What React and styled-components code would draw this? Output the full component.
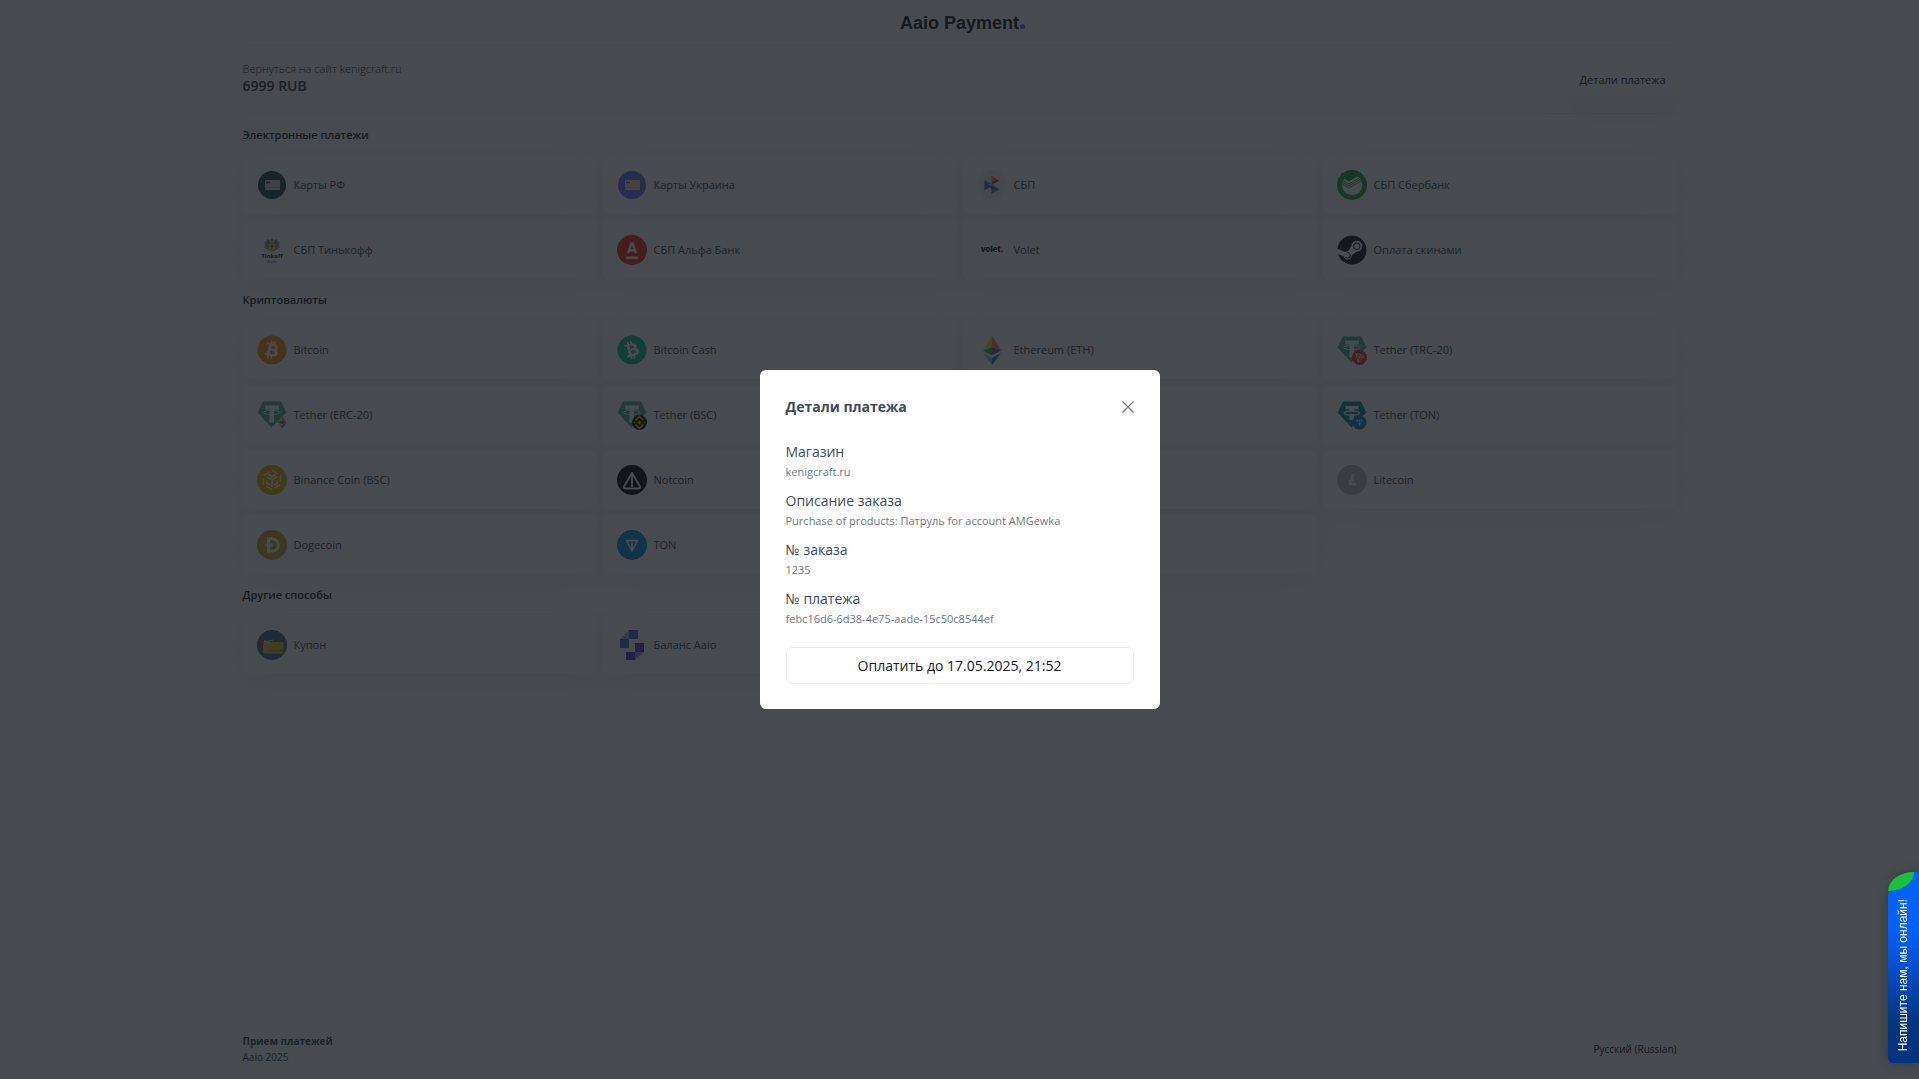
import React, { useState } from 'react';
import styled, { createGlobalStyle } from 'styled-components';
import { FaBitcoin, FaSteam } from 'react-icons/fa';

const GlobalStyle = createGlobalStyle`
  * {
    box-sizing: border-box;
  }

  body {
    margin: 0;
    background: #ffffff;
    color: #3e4b5b;
    font-family: 'Open Sans', 'Noto Sans', sans-serif;
    font-size: 11px;
  }

  button {
    font-family: inherit;
    font-size: 11px;
  }
`;

const Page = styled.div`
  min-height: 100vh;
  max-width: 1466px;
  margin: 0 auto;
  padding: 0 16px;
  display: flex;
  flex-direction: column;
`;

const Header = styled.header`
  height: 46px;
  padding: 2px 0 0 6px;
  display: flex;
  align-items: center;
  justify-content: center;
  border-bottom: 1px solid #f3f5f7;
`;

const Logo = styled.a`
  display: flex;
  align-items: baseline;
  color: #16202b;
  font-family: 'Liberation Sans', Arial, sans-serif;
  font-size: 18px;
  font-weight: 700;
  text-decoration: none;
`;

const LogoDot = styled.span`
  width: 5px;
  height: 5px;
  margin-left: 1px;
  border-radius: 50%;
  background: #5c74ea;
`;

const Summary = styled.div`
  height: 68px;
  display: flex;
  align-items: center;
  justify-content: space-between;
  border-bottom: 1px solid #f3f5f7;
`;

const BackLink = styled.a`
  display: block;
  margin-top: -4px;
  color: #2c3a4a;
  font-weight: 300;
  line-height: 16px;
  text-decoration: none;
`;

const Amount = styled.div`
  color: #2c3a4a;
  font-size: 14px;
  font-weight: 600;
  line-height: 18px;
`;

const DetailsButton = styled.button`
  height: 30px;
  padding: 0 11px;
  border: none;
  border-radius: 5px;
  background: #ffffff;
  color: #1d2935;
  box-shadow: 0 16px 40px rgba(60, 80, 90, 0.08);
`;

const SectionTitle = styled.h2`
  margin: 0;
  color: #16202b;
  font-size: 11px;
  font-weight: 600;
  line-height: 41px;
`;

const Grid = styled.div`
  display: grid;
  grid-template-columns: repeat(4, 1fr);
  gap: 6px;
`;

const MethodCard = styled.button`
  height: 59px;
  padding: 0 14px;
  display: flex;
  align-items: center;
  gap: 7px;
  border: none;
  border-radius: 5px;
  background: #ffffff;
  color: #3e4b5b;
  text-align: left;
  box-shadow: 0 6px 30px rgba(60, 80, 90, 0.07);
`;

const IconBox = styled.span`
  width: 30px;
  height: 30px;
  display: flex;
  color: ${props => props.$color || 'inherit'};

  svg {
    width: 30px;
    height: 30px;
    transform: rotate(${props => props.$turn || 0}deg);
  }
`;

const Footer = styled.footer`
  margin-top: auto;
  padding-bottom: 14px;
  display: flex;
  align-items: center;
  justify-content: space-between;
  color: #3e4b5b;
  font-size: 10px;
  line-height: 16px;
`;

const LanguageButton = styled.button`
  padding: 0;
  border: none;
  background: none;
  color: #16202b;
  font-size: 10px;
`;

const Overlay = styled.div`
  position: fixed;
  inset: 0;
  display: flex;
  align-items: center;
  justify-content: center;
  background: rgba(21, 25, 30, 0.79);
`;

const Modal = styled.div`
  width: 400px;
  padding: 26px 26px 25px;
  border-radius: 6px;
  background: #ffffff;
`;

const ModalHeader = styled.div`
  margin-bottom: 24px;
  display: flex;
  align-items: center;
  justify-content: space-between;
`;

const ModalTitle = styled.h3`
  margin: 0;
  font-size: 14px;
  font-weight: 700;
  line-height: 22px;
`;

const CloseButton = styled.button`
  padding: 0;
  display: flex;
  border: none;
  background: none;
  color: #808080;
`;

const DetailList = styled.dl`
  margin: 0 0 19px;
  display: grid;
  gap: 10px;
`;

const DetailLabel = styled.dt`
  font-size: 14px;
  font-weight: 500;
  line-height: 20px;
`;

const DetailValue = styled.dd`
  margin: 0;
  color: #6e7a8a;
  font-size: 11px;
  line-height: 19px;
`;

const PayButton = styled.button`
  width: 100%;
  height: 37px;
  border: 1px solid #ebecf2;
  border-radius: 7px;
  background: #ffffff;
  color: #16192c;
  font-size: 14px;
`;

const ChatTab = styled.button`
  position: fixed;
  right: 0;
  bottom: 16px;
  width: 31px;
  height: 191px;
  padding: 0 2px 12px 0;
  display: flex;
  align-items: flex-end;
  justify-content: center;
  border: none;
  border-radius: 26px 0 0 5px;
  background: linear-gradient(#0061ff 30%, #00347e 80%);
  color: #ffffff;
  font-family: 'Liberation Sans', Arial, sans-serif;
  font-size: 12px;
  box-shadow: 0 0 12px rgba(0, 0, 0, 0.25);

  span {
    writing-mode: vertical-rl;
    transform: rotate(180deg);
    white-space: nowrap;
  }
`;

const ChatLeaf = styled.i`
  position: absolute;
  top: 0;
  left: 0;
  width: 26px;
  height: 19px;
  border-radius: 26px 0 26px 0 / 19px 0 19px 0;
  background: #18c139;
`;

const Svg = ({ children }) => (
  <svg viewBox="0 0 30 30" fill="none" aria-hidden="true">{children}</svg>
);

const CardIcon = ({ bg, card }) => (
  <Svg>
    <circle cx="15" cy="15" r="14" fill={bg} />
    <rect x="8" y="10" width="15" height="10" rx="1" fill={card} />
    <path d="M8 17.500h15" stroke={bg} strokeOpacity="0.3" />
    <path d="M9 12.500h4" stroke={bg} strokeWidth="1.500" />
  </Svg>
);

const SbpIcon = () => (
  <Svg>
    <circle cx="15" cy="15" r="14.500" fill="#f1f3f5" />
    <path d="M7.500 10v10.500l3-5.250z" fill="#5b57a2" />
    <path d="M7.500 10l6 3.500-3 2z" fill="#1d8cc8" />
    <path d="M7.500 20.500l6-4-3-1.500z" fill="#8b4ba0" />
    <path d="M14.500 6v9l3-5z" fill="#f9a61a" />
    <path d="M14.500 6l8 4.500-5 1z" fill="#ee6a23" />
    <path d="M22.500 10.500l-8 4.500 1-4z" fill="#d8195a" />
    <path d="M14.500 15v9l3-5z" fill="#1b9a4a" />
    <path d="M14.500 24l8-4.500-5-2z" fill="#63b22f" />
    <path d="M10 14l12.500 5.500-8-.5z" fill="#1474bb" />
    <path d="M10 10.800l12.500 8.700h-3z" fill="#1d8cc8" />
  </Svg>
);

const SberIcon = () => (
  <Svg>
    <circle cx="15" cy="15" r="15" fill="#21a038" />
    <circle cx="15.200" cy="15" r="10.200" fill="#fff" />
    <path d="M4 3h20l-3 3-9.500 5.500-6-4z" fill="#21a038" />
    <path
      d="M4 9.500l7.500 4.500L24 7M4 11.500l7.500 4.500L25 8.500M4 13.500l7.500 4.500L26 10"
      stroke="#21a038"
      strokeWidth="0.900"
    />
  </Svg>
);

const TinkoffIcon = () => (
  <Svg>
    <path
      d="M15 3l2 2 3-1 1 2 2 1-1 3 1 2-2 2-2 1-4 2-4-2-2-1-2-2 1-2-1-3 2-1 1-2 3 1z"
      fill="#a9acae"
    />
    <path d="M11 6l2 6M19 6l-2 6M8 9l4 3M22 9l-4 3M10 5l1 4M20 5l-1 4" stroke="#666" strokeWidth="0.800" />
    <path d="M12 9h6v3c0 2-1.500 3-3 4-1.500-1-3-2-3-4z" fill="#e2c64c" />
    <path d="M13.500 11h3M15 11v3" stroke="#555" />
    <text x="15" y="22.500" textAnchor="middle" fontSize="6" fontWeight="700" fill="#222">Tinkoff</text>
    <text x="15" y="27.500" textAnchor="middle" fontSize="4" fill="#444">Bank</text>
  </Svg>
);

const AlfaIcon = () => (
  <Svg>
    <circle cx="15" cy="15" r="15" fill="#ef3124" />
    <path d="M11.200 18l3.100-9.500h1.400l3.100 9.500M12.300 15.200h5.400" stroke="#fff" strokeWidth="2.400" />
    <path d="M9 22.700h12" stroke="#fff" strokeWidth="2.400" />
  </Svg>
);

const VoletIcon = () => (
  <Svg>
    <text
      x="15"
      y="16.500"
      textAnchor="middle"
      fontFamily="Inter, sans-serif"
      fontSize="8"
      fontWeight="800"
      fill="#111"
    >
      volet.
    </text>
  </Svg>
);

const EthShape = () => (
  <>
    <path d="M15 1L6 15.500 15 12z" fill="#f2e36b" />
    <path d="M15 1l9 14.500L15 12z" fill="#e88a5b" />
    <path d="M6 15.500L15 12v8.500z" fill="#4fa85c" />
    <path d="M24 15.500L15 12v8.500z" fill="#7d4fa8" />
    <path d="M6 18l9 5v7z" fill="#7fc7e0" />
    <path d="M24 18l-9 5v7z" fill="#3d64b5" />
  </>
);

const EthIcon = () => (
  <Svg>
    <EthShape />
  </Svg>
);

const TetherIcon = ({ color = '#50af95', children }) => (
  <Svg>
    <path d="M6 1.500h18l5.500 11L14.500 27.500.500 12.500z" fill={color} />
    <path d="M8 5.500h14v4h-5v13h-4.500v-13H8z" fill="#fff" />
    <ellipse cx="14.800" cy="12.500" rx="8.500" ry="2" stroke="#fff" strokeWidth="0.900" />
    {children}
  </Svg>
);

const TetherTonIcon = () => (
  <Svg>
    <path d="M6 1.500h18l5.500 11L14.500 27.500.500 12.500z" fill="#009393" />
    <path d="M8.500 6h13v3h-4.500v2.500h-4.500V9h-4zM12.500 14h4.500v6h-4.500z" fill="#fff" />
    <ellipse cx="14.800" cy="13" rx="7.500" ry="2" stroke="#fff" strokeWidth="1.500" />
    <circle cx="22.500" cy="22.500" r="7" fill="#0088cc" />
    <g transform="translate(15 15) scale(0.5)"><TonShape /></g>
  </Svg>
);

const TronBadge = () => (
  <>
    <circle cx="22.500" cy="22.500" r="7.500" fill="#ef2e2e" />
    <path
      d="M18.500 18.500l6 1.300 2 2-5 5.500zM18.500 18.500l3.500 4 4.500-.7M22 22.500l-.5 4.800M22 22.500l2.500-2.700"
      stroke="#fff"
      strokeWidth="0.800"
    />
  </>
);

const BscBadge = () => (
  <>
    <circle cx="22.500" cy="22.500" r="7.500" fill="#111" />
    <path d="M18.500 20.500l4-4 4 4M18.500 24.500l4 4 4-4" stroke="#f0b90b" strokeWidth="1.600" />
    <path d="M22.500 20.500l2 2-2 2-2-2zM17.500 21.500l1 1-1 1-1-1zM27.500 21.500l1 1-1 1-1-1z" fill="#f0b90b" />
  </>
);

const TonShape = () => (
  <path d="M9.500 10.500h11L15 21zM15 10.500V21" stroke="#fff" strokeWidth="1.600" strokeLinejoin="round" />
);

const BnbIcon = () => (
  <Svg>
    <circle cx="15" cy="15" r="15" fill="#e5b000" />
    <path
      d="M15 5.500l8.500 4.800v9.400L15 24.500l-8.500-4.800v-9.400z"
      stroke="#fff"
      strokeWidth="1.400"
      strokeDasharray="7 2.600"
    />
    <path
      d="M9.500 11.500l5.500 3.300 5.500-3.300M15 14.800V22M11.500 9.500L15 11.500l3.500-2M10 15.500v3l2.500 1.500M20 15.500v3L17.500 20"
      stroke="#fff"
      strokeWidth="1.600"
    />
  </Svg>
);

const NotcoinIcon = () => (
  <Svg>
    <circle cx="15" cy="15" r="15" fill="#050505" />
    <path
      d="M15 8L7 21.500q-.5 2 1.500 2h13q2 0 1.500-2zM15 8v14"
      stroke="#fff"
      strokeWidth="1.800"
      strokeLinejoin="round"
    />
  </Svg>
);

const LitecoinIcon = () => (
  <Svg>
    <circle cx="15" cy="15" r="15" fill="#bfbfbf" />
    <path d="M15.800 9.500L13.300 19h6M11.500 16.300l5.500-2" stroke="#fff" strokeWidth="2.600" />
  </Svg>
);

const DogeIcon = () => (
  <Svg>
    <circle cx="15" cy="15" r="15" fill="#c2a633" />
    <path d="M11.500 8.800H15c8.500 0 8.500 12.500 0 12.500h-3.500zM8.500 15h7.500" stroke="#fff" strokeWidth="3" />
  </Svg>
);

const TonIcon = () => (
  <Svg>
    <circle cx="15" cy="15" r="15" fill="#0098ea" />
    <TonShape />
  </Svg>
);

const CouponIcon = () => (
  <Svg>
    <circle cx="15" cy="15" r="15" fill="#4c6b8a" />
    <rect x="6" y="12" width="20.500" height="11.500" rx="1" fill="#d9c73a" />
    <text x="19" y="22" textAnchor="middle" fontSize="4" fontWeight="700" fill="#8d8030">COUPON</text>
    <path d="M7 12l9-2M7 10.500l8 4" stroke="#e8ecef" strokeWidth="1.200" />
    <circle cx="5" cy="9.500" r="1.500" stroke="#c23a3a" strokeWidth="1.200" />
    <circle cx="4.500" cy="14" r="1.500" stroke="#c23a3a" strokeWidth="1.200" />
  </Svg>
);

const AaioIcon = () => (
  <Svg>
    <path d="M3 9L12 0v9z" fill="#98a8f0" />
    <path d="M12 0h9v9h-9zM3 9h9v9H3z" fill="#4a63e4" />
    <path d="M18 13h9v9h-9zM9 22h9v8H9z" fill="#5a35d6" />
    <path d="M18 22h9l-9 8z" fill="#a693ea" />
  </Svg>
);

const sections = [
  {
    title: 'Электронные платежи',
    methods: [
      { name: 'Карты РФ', icon: <CardIcon bg="#2c4656" card="#d5d9dc" /> },
      { name: 'Карты Украина', icon: <CardIcon bg="#5f74f5" card="#e3dcb0" /> },
      { name: 'СБП', icon: <SbpIcon /> },
      { name: 'СБП Сбербанк', icon: <SberIcon /> },
      { name: 'СБП Тинькофф', icon: <TinkoffIcon /> },
      { name: 'СБП Альфа Банк', icon: <AlfaIcon /> },
      { name: 'Volet', icon: <VoletIcon /> },
      { name: 'Оплата скинами', icon: <FaSteam />, color: '#171a21' }
    ]
  },
  {
    title: 'Криптовалюты',
    methods: [
      { name: 'Bitcoin', icon: <FaBitcoin />, color: '#f7931a' },
      { name: 'Bitcoin Cash', icon: <FaBitcoin />, color: '#0ac18e', turn: -28 },
      { name: 'Ethereum (ETH)', icon: <EthIcon /> },
      { name: 'Tether (TRC-20)', icon: <TetherIcon><TronBadge /></TetherIcon> },
      {
        name: 'Tether (ERC-20)',
        icon: (
          <TetherIcon>
            <g transform="translate(18 15) scale(0.46)"><EthShape /></g>
          </TetherIcon>
        )
      },
      { name: 'Tether (BSC)', icon: <TetherIcon><BscBadge /></TetherIcon> },
      { name: 'Tether (SOL)', icon: <TetherIcon /> },
      { name: 'Tether (TON)', icon: <TetherTonIcon /> },
      { name: 'Binance Coin (BSC)', icon: <BnbIcon /> },
      { name: 'Notcoin', icon: <NotcoinIcon /> },
      { name: 'Tron', icon: <Svg><TronBadge /></Svg> },
      { name: 'Litecoin', icon: <LitecoinIcon /> },
      { name: 'Dogecoin', icon: <DogeIcon /> },
      { name: 'TON', icon: <TonIcon /> },
      { name: 'USDC', icon: <TonIcon /> }
    ]
  },
  {
    title: 'Другие способы',
    methods: [
      { name: 'Купон', icon: <CouponIcon /> },
      { name: 'Баланс Aaio', icon: <AaioIcon /> }
    ]
  }
];

const details = [
  { label: 'Магазин', value: 'kenigcraft.ru' },
  { label: 'Описание заказа', value: 'Purchase of products: Патруль for account AMGewka' },
  { label: '№ заказа', value: '1235' },
  { label: '№ платежа', value: 'febc16d6-6d38-4e75-aade-15c50c8544ef' }
];

const DetailsModal = ({ onClose }) => (
  <Overlay>
    <Modal role="dialog" aria-modal="true" aria-labelledby="details-title">
      <ModalHeader>
        <ModalTitle id="details-title">Детали платежа</ModalTitle>
        <CloseButton aria-label="Закрыть" onClick={onClose}>
          <svg width="12" height="12" viewBox="0 0 12 12" stroke="currentColor" strokeWidth="1.300">
            <path d="M.500.500l11 11M11.500.500l-11 11" />
          </svg>
        </CloseButton>
      </ModalHeader>
      <DetailList>
        {details.map(item => (
          <div key={item.label}>
            <DetailLabel>{item.label}</DetailLabel>
            <DetailValue>{item.value}</DetailValue>
          </div>
        ))}
      </DetailList>
      <PayButton>Оплатить до 17.05.2025, 21:52</PayButton>
    </Modal>
  </Overlay>
);

const App = () => {
  const [detailsOpen, setDetailsOpen] = useState(true);

  return (
    <>
      <GlobalStyle />
      <Page>
        <Header>
          <Logo href="#">
            Aaio Payment
            <LogoDot />
          </Logo>
        </Header>
        <Summary>
          <div>
            <BackLink href="#">Вернуться на сайт kenigcraft.ru</BackLink>
            <Amount>6999 RUB</Amount>
          </div>
          <DetailsButton onClick={() => setDetailsOpen(true)}>Детали платежа</DetailsButton>
        </Summary>
        <main>
          {sections.map(section => (
            <section key={section.title}>
              <SectionTitle>{section.title}</SectionTitle>
              <Grid>
                {section.methods.map(method => (
                  <MethodCard key={method.name}>
                    <IconBox $color={method.color} $turn={method.turn}>{method.icon}</IconBox>
                    {method.name}
                  </MethodCard>
                ))}
              </Grid>
            </section>
          ))}
        </main>
        <Footer>
          <div>
            <strong>Прием платежей</strong>
            <div>Aaio 2025</div>
          </div>
          <LanguageButton>Русский (Russian)</LanguageButton>
        </Footer>
      </Page>
      {detailsOpen && <DetailsModal onClose={() => setDetailsOpen(false)} />}
      <ChatTab>
        <ChatLeaf />
        <span>Напишите нам, мы онлайн!</span>
      </ChatTab>
    </>
  );
};

export default App;
